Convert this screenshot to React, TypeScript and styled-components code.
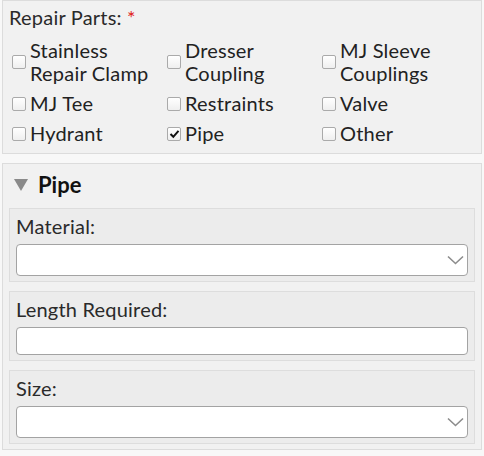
import React from 'react';
import styled, {createGlobalStyle} from 'styled-components';

const GlobalStyle = createGlobalStyle`
  body {
    margin: 0;
    background: #f8f8f8;
    font-family: Lato, "Open Sans", sans-serif;
    color: #222;
  }
`

const Page = styled.div`
  width: 484px;
  display: flex;
  flex-direction: column;
  gap: 9px;
`

const Panel = styled.div`
  margin: 0 2px;
  background: #f1f1f1;
  border: 1px solid #dcdcdc;
`

const PartsPanel = styled(Panel)`
  padding: 5px 9px 8px 6px;
`

const FieldLabel = styled.div`
  font-size: 20px;
  line-height: 23px;
  letter-spacing: 0.2px;
  color: #2a2a2a;
`

const Required = styled.span`
  color: #e02020;
`

const PartsGrid = styled.div`
  display: grid;
  grid-template-columns: repeat(3, 155px);
  row-gap: 7px;
  margin: 10px 0 0 3px;
`

const Option = styled.label`
  display: flex;
  align-items: center;
  gap: 4px;
  font-size: 20px;
  line-height: 23px;
  letter-spacing: 0.2px;
  color: #222;
`

const Box = styled.span`
  flex: none;
  width: 12px;
  height: 12px;
  border: 1px solid #aaaaaa;
  border-radius: 2px;
  background: linear-gradient(#ffffff, #efefef);
  display: flex;
  align-items: center;
  justify-content: center;
`

const SectionPanel = styled(Panel)`
  padding: 8px 6px 5px 6px;
  display: flex;
  flex-direction: column;
  gap: 9px;
`

const SectionHeader = styled.div`
  display: flex;
  align-items: center;
  gap: 10px;
  padding-left: 5px;
  margin-bottom: 1px;
  font-size: 22px;
  font-weight: 700;
  line-height: 26px;
  color: #111;
`

const Triangle = styled.span`
  width: 0;
  height: 0;
  border-left: 7px solid transparent;
  border-right: 7px solid transparent;
  border-top: 12px solid #8a8a8a;
`

const FieldBox = styled.div`
  background: #ececec;
  border: 1px solid #dddddd;
  padding: 6px 6px 5px 6px;
  display: flex;
  flex-direction: column;
  gap: 6px;
`

const Control = styled.div<{tall?: boolean}>`
  height: ${props => props.tall ? '30px' : '26px'};
  background: #fff;
  border: 1px solid #a3a3a3;
  border-radius: 4px;
  display: flex;
  align-items: center;
  justify-content: flex-end;
  padding-right: 3px;
`

const Chevron = () => (
  <svg width="17" height="10" viewBox="0 0 17 10">
    <path d="M1 1.5 L8.5 8.5 L16 1.5" fill="none" stroke="#8c8c8c" strokeWidth="1.6"/>
  </svg>
)

const parts = [
  {name: 'Stainless\nRepair Clamp'},
  {name: 'Dresser\nCoupling'},
  {name: 'MJ Sleeve\nCouplings'},
  {name: 'MJ Tee'},
  {name: 'Restraints'},
  {name: 'Valve'},
  {name: 'Hydrant'},
  {name: 'Pipe', checked: true},
  {name: 'Other'},
]

const App = () => {
  return (
    <Page>
      <GlobalStyle/>
      <PartsPanel>
        <FieldLabel>Repair Parts: <Required>*</Required></FieldLabel>
        <PartsGrid>
          {parts.map(p => (
            <Option key={p.name}>
              <Box>
                {p.checked ? (
                  <svg width="11" height="10" viewBox="0 0 11 10">
                    <path d="M1.5 5 L4.3 7.8 L9.5 1.8" fill="none" stroke="#111" strokeWidth="2"/>
                  </svg>
                ) : null}
              </Box>
              <span style={{whiteSpace: 'pre-line'}}>{p.name}</span>
            </Option>
          ))}
        </PartsGrid>
      </PartsPanel>
      <SectionPanel>
        <SectionHeader><Triangle/>Pipe</SectionHeader>
        <FieldBox>
          <FieldLabel>Material:</FieldLabel>
          <Control tall><Chevron/></Control>
        </FieldBox>
        <FieldBox>
          <FieldLabel>Length Required:</FieldLabel>
          <Control/>
        </FieldBox>
        <FieldBox>
          <FieldLabel>Size:</FieldLabel>
          <Control tall><Chevron/></Control>
        </FieldBox>
      </SectionPanel>
    </Page>
  );
};

export default App;
